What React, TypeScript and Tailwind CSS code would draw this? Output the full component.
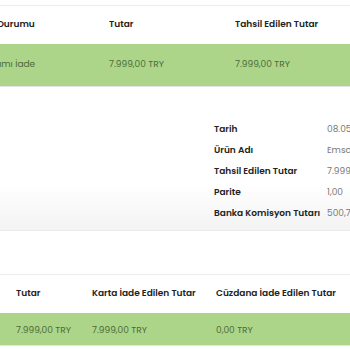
import React from "react";

const font = { fontFamily: "Poppins, Inter, 'Noto Sans', sans-serif" };

export default function App() {
  const details: [string, string][] = [
    ["Tarih", "08.05.2024 14:32"],
    ["Ürün Adı", "Emsan Tencere Seti"],
    ["Tahsil Edilen Tutar", "7.999,00 TRY"],
    ["Parite", "1,00"],
    ["Banka Komisyon Tutarı", "500,70 TRY"],
  ];
  return (
    <div className="w-[350px] h-[350px] overflow-hidden bg-white text-[9px]" style={font}>
      {/* top table */}
      <div className="pt-[5px]">
        <div className="border-t border-[#ececec] ml-[-25px] w-[420px]">
          <div className="flex h-[38px] items-center font-semibold text-[#222]">
            <div className="w-[134px] shrink-0 whitespace-nowrap">İade Durumu</div>
            <div className="w-[126px] shrink-0">Tutar</div>
            <div className="whitespace-nowrap">Tahsil Edilen Tutar</div>
          </div>
          <div className="flex h-[43px] items-center bg-[#acd58a] text-[#4b6b36] border-b border-[#e4e4e4]">
            <div className="w-[134px] shrink-0 whitespace-nowrap">Tamamı İade</div>
            <div className="w-[126px] shrink-0 whitespace-nowrap">7.999,00 TRY</div>
            <div className="whitespace-nowrap">7.999,00 TRY</div>
          </div>
        </div>
      </div>
      {/* detail card */}
      <div className="h-[144px] bg-[linear-gradient(to_bottom,#ffffff_0%,#ffffff_68%,#f3f3f3_100%)] border-b border-[#ebebeb] pt-[36px] pl-[214px] overflow-hidden">
        <div className="flex flex-col gap-[8px] w-[300px]">
          {details.map(([k, v]) => (
            <div key={k} className="flex h-[13px] items-center whitespace-nowrap">
              <div className="w-[113px] shrink-0 font-semibold text-[#222]">{k}</div>
              <div className="shrink-0 text-[#777]">{v}</div>
            </div>
          ))}
        </div>
      </div>
      {/* bottom table */}
      <div className="pt-[43px]">
        <div className="border-t border-[#ececec] pl-[16px]">
          <div className="flex h-[38px] items-center font-semibold text-[#222]">
            <div className="w-[76px] shrink-0">Tutar</div>
            <div className="w-[124px] shrink-0 whitespace-nowrap">Karta İade Edilen Tutar</div>
            <div className="whitespace-nowrap">Cüzdana İade Edilen Tutar</div>
          </div>
        </div>
        <div className="flex h-[33px] pt-[3px] items-center bg-[#acd58a] text-[#4b6b36] border-b border-[#e4e4e4] pl-[16px]">
          <div className="w-[76px] shrink-0 whitespace-nowrap">7.999,00 TRY</div>
          <div className="w-[124px] shrink-0 whitespace-nowrap">7.999,00 TRY</div>
          <div className="whitespace-nowrap">0,00 TRY</div>
        </div>
      </div>
    </div>
  );
}
